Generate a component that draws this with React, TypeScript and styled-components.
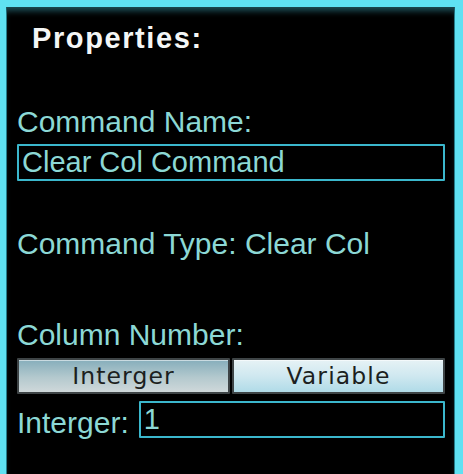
import styled, { createGlobalStyle } from "styled-components";
import { useState } from "react";

const GlobalStyle = createGlobalStyle`
  html, body {
    margin: 0;
    padding: 0;
    background: #000;
  }
`;

export default function App() {
  let [mode, setMode] = useState<"int" | "var">("int");
  let [name, setName] = useState("Clear Col Command");
  let [value, setValue] = useState("1");

  return (
    <>
      <GlobalStyle />
      <Panel>
        <Title>Properties:</Title>

        <Label $top={50}>Command Name:</Label>
        <TextBox value={name} onChange={(e) => setName(e.target.value)} />

        <Label $top={46}>Command Type: Clear Col</Label>

        <Label $top={57}>Column Number:</Label>
        <Toggle>
          <ToggleButton $active={mode === "int"} onClick={() => setMode("int")}>
            Interger
          </ToggleButton>
          <ToggleButton $active={mode === "var"} onClick={() => setMode("var")}>
            Variable
          </ToggleButton>
        </Toggle>

        <Row>
          <RowLabel>Interger:</RowLabel>
          <TextBox value={value} onChange={(e) => setValue(e.target.value)} />
        </Row>
      </Panel>
    </>
  );
}

const Panel = styled.div`
  box-sizing: border-box;
  width: 463px;
  height: 474px;
  background: #000;
  border-top: 7px solid #5fe1f2;
  border-left: 6px solid #5fe1f2;
  border-right: 8px solid #5fe1f2;
  box-shadow: inset 0 6px 6px -2px #1d4f58, inset 1px 0 0 #2a8d9c,
    inset -1px 0 0 #2a8d9c;
  padding: 14px 10px 0 11px;

  display: flex;
  flex-direction: column;
  font-family: "Liberation Sans", Arial, sans-serif;
`;

const Title = styled.div`
  font-size: 29px;
  line-height: 34px;
  font-weight: 700;
  letter-spacing: 1.6px;
  color: #f4f6f6;
  padding-left: 15px;
`;

const Label = styled.div<{ $top: number }>`
  margin-top: ${({ $top }) => $top}px;
  font-size: 30px;
  line-height: 34px;
  color: #8cd8d5;
  white-space: nowrap;
`;

const TextBox = styled.input`
  box-sizing: border-box;
  width: 100%;
  height: 37px;
  margin: 5px 0 0 0;
  padding: 0 3px;
  background: #000;
  border: 2px solid #3bb7cc;
  border-radius: 1px;
  outline: none;
  font-family: "Liberation Sans", Arial, sans-serif;
  font-size: 29px;
  line-height: 33px;
  color: #8cd8d5;
`;

const Toggle = styled.div`
  margin-top: 6px;
  display: grid;
  grid-template-columns: 1fr 1fr;
  gap: 2px;
  height: 36px;
`;

const ToggleButton = styled.button<{ $active: boolean }>`
  box-sizing: border-box;
  height: 36px;
  padding: 0;
  border: 2px solid #3e4446;
  border-radius: 1px;
  background: ${({ $active }) =>
    $active
      ? "linear-gradient(#86aebb, #b4c9ce 55%, #cfd8da)"
      : "linear-gradient(#e6f2f5, #cfe8f0 50%, #b0dbe8)"};
  box-shadow: inset 0 1px 0 rgba(255, 255, 255, 0.55);
  font-family: "DejaVu Sans", Verdana, sans-serif;
  font-size: 23.5px;
  letter-spacing: 1.1px;
  color: #1c1f20;
  cursor: pointer;
`;

const Row = styled.div`
  margin-top: 7px;
  display: flex;
  align-items: flex-start;
  gap: 10px;

  & > input {
    margin-top: 0;
    flex: 1;
  }
`;

const RowLabel = styled.div`
  padding-top: 5px;
  font-size: 30px;
  line-height: 34px;
  color: #8cd8d5;
  white-space: nowrap;
`;
